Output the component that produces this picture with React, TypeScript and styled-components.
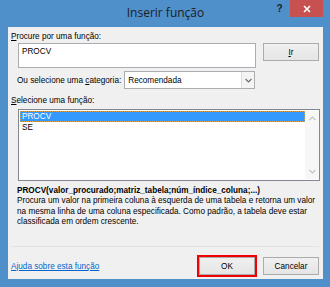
import styled, { createGlobalStyle } from "styled-components";

const GlobalStyle = createGlobalStyle`
  html, body {
    margin: 0;
    padding: 0;
    background: #ffffff;
  }

  * {
    box-sizing: border-box;
  }
`;

const rows = ["PROCV", "SE"];

function Chevron({ up }: { up?: boolean }) {
  return (
    <svg width="7" height="5" viewBox="0 0 7 5">
      <path
        d={up ? "M0.5 4 L3.5 1 L6.5 4" : "M0.5 1 L3.5 4 L6.5 1"}
        fill="none"
        stroke="currentColor"
        strokeWidth="1.2"
      />
    </svg>
  );
}

export default function App() {
  return (
    <>
      <GlobalStyle />
      <Window>
        <TitleBar>
          <span />
          <Title>Inserir função</Title>
          <Controls>
            <HelpButton>?</HelpButton>
            <CloseButton>
              <svg width="8" height="8" viewBox="0 0 8 8">
                <path
                  d="M1 1 L7 7 M7 1 L1 7"
                  stroke="#ffffff"
                  strokeWidth="1.6"
                />
              </svg>
            </CloseButton>
          </Controls>
        </TitleBar>

        <Panel>
          <Label>
            <u>P</u>rocure por uma função:
          </Label>

          <SearchRow>
            <SearchBox>PROCV</SearchBox>
            <Button>
              <u>I</u>r
            </Button>
          </SearchRow>

          <CategoryRow>
            <Label>
              Ou selecione uma <u>c</u>ategoria:
            </Label>
            <Select>
              <span>Recomendada</span>
              <SelectArrow>
                <Chevron />
              </SelectArrow>
            </Select>
          </CategoryRow>

          <Label $top={6}>
            <u>S</u>elecione uma função:
          </Label>

          <ListBox>
            <ListItems>
              {rows.map((r, i) => (
                <ListRow key={r} $selected={i === 0}>
                  {r}
                </ListRow>
              ))}
            </ListItems>
            <ScrollBar>
              <Chevron up />
              <Chevron />
            </ScrollBar>
          </ListBox>

          <Signature>
            PROCV(valor_procurado;matriz_tabela;núm_índice_coluna;...)
          </Signature>
          <Description>
            Procura um valor na primeira coluna à esquerda de uma tabela e
            retorna um valor
            <br />
            na mesma linha de uma coluna especificada. Como padrão, a tabela
            deve estar
            <br />
            classificada em ordem crescente.
          </Description>

          <Footer>
            <HelpLink href="#">Ajuda sobre esta função</HelpLink>
            <Buttons>
              <Button $width={56} $highlight>
                OK
              </Button>
              <Button $width={56}>Cancelar</Button>
            </Buttons>
          </Footer>
        </Panel>
      </Window>
    </>
  );
}

const Window = styled.div`
  width: 330px;
  height: 287px;
  background: #4f8fca;
  padding: 0 7px 8px 8px;

  display: flex;
  flex-direction: column;

  font-family: "Liberation Sans", Arial, sans-serif;
  font-size: 8.2px;
  color: #000;
`;

const TitleBar = styled.div`
  height: 27px;
  display: grid;
  grid-template-columns: 1fr auto 1fr;
  align-items: center;
`;

const Title = styled.div`
  font-family: "Open Sans", "Noto Sans", sans-serif;
  font-size: 12px;
  color: #1e1e1e;
  padding-bottom: 2px;
`;

const Controls = styled.div`
  align-self: start;
  justify-self: end;
  display: flex;
  align-items: flex-start;
`;

const HelpButton = styled.div`
  width: 21px;
  height: 16px;
  display: flex;
  align-items: center;
  justify-content: center;
  font-family: "Liberation Sans", Arial, sans-serif;
  font-weight: bold;
  font-size: 10px;
  color: #1e1e1e;
`;

const CloseButton = styled.div`
  width: 33px;
  height: 17px;
  background: #c75050;
  display: flex;
  align-items: center;
  justify-content: center;
`;

const Panel = styled.div`
  flex: 1;
  background: #f0f0f0;
  padding: 4px 4px 4px 3px;

  display: flex;
  flex-direction: column;
`;

const Label = styled.div<{ $top?: number }>`
  line-height: 11px;
  margin-top: ${(p) => p.$top ?? 0}px;
  white-space: nowrap;
`;

const SearchRow = styled.div`
  display: flex;
  align-items: flex-start;
  gap: 7px;
  margin: 1px 0 0 7px;
`;

const SearchBox = styled.div`
  width: 238px;
  height: 25px;
  background: #fff;
  border: 1px solid #abadb3;
  padding: 2px 3px;
  line-height: 11px;
`;

const Button = styled.div<{ $width?: number; $highlight?: boolean }>`
  width: ${(p) => p.$width ?? 56}px;
  height: 18px;
  border: 1px solid #acacac;
  background: linear-gradient(#f0f0f0, #e5e5e5);
  display: flex;
  align-items: center;
  justify-content: center;
  outline: ${(p) => (p.$highlight ? "2px solid #f00000" : "none")};
`;

const CategoryRow = styled.div`
  display: flex;
  align-items: center;
  gap: 3px;
  margin: 3px 0 0 6px;
`;

const Select = styled.div`
  width: 131px;
  height: 18px;
  background: #fff;
  border: 1px solid #abadb3;
  display: flex;
  align-items: center;
  justify-content: space-between;
  padding-left: 3px;
`;

const SelectArrow = styled.div`
  width: 13px;
  height: 100%;
  border-left: 1px solid #dcdcdc;
  background: #f4f4f4;
  display: flex;
  align-items: center;
  justify-content: center;
  color: #6d6d6d;
`;

const ListBox = styled.div`
  width: 302px;
  height: 72px;
  margin: 3px 0 0 7px;
  background: #fff;
  border: 1px solid #828790;
  display: flex;
  padding: 1px 0 1px 1px;
`;

const ListItems = styled.div`
  flex: 1;
`;

const ListRow = styled.div<{ $selected?: boolean }>`
  height: 11px;
  line-height: 10px;
  padding-left: 1px;
  background: ${(p) => (p.$selected ? "#3399ff" : "transparent")};
  color: ${(p) => (p.$selected ? "#fff" : "#000")};
  border: 1px dotted ${(p) => (p.$selected ? "#d9a44d" : "transparent")};
`;

const ScrollBar = styled.div`
  width: 14px;
  background: #f7f7f7;
  display: flex;
  flex-direction: column;
  align-items: center;
  justify-content: space-between;
  padding: 5px 0 5px;
  color: #c4c4c4;
`;

const Signature = styled.div`
  margin: 4px 0 0 6px;
  font-weight: bold;
  line-height: 11px;
  white-space: nowrap;
`;

const Description = styled.div`
  margin-left: 6px;
  line-height: 10.5px;
  white-space: nowrap;
`;

const Footer = styled.div`
  margin-top: auto;
  border-top: 1px solid #e2e2e2;
  padding-top: 10px;
  display: flex;
  align-items: center;
  justify-content: space-between;
`;

const HelpLink = styled.a`
  color: #0066cc;
  text-decoration: underline;
`;

const Buttons = styled.div`
  display: flex;
  gap: 8px;
`;
